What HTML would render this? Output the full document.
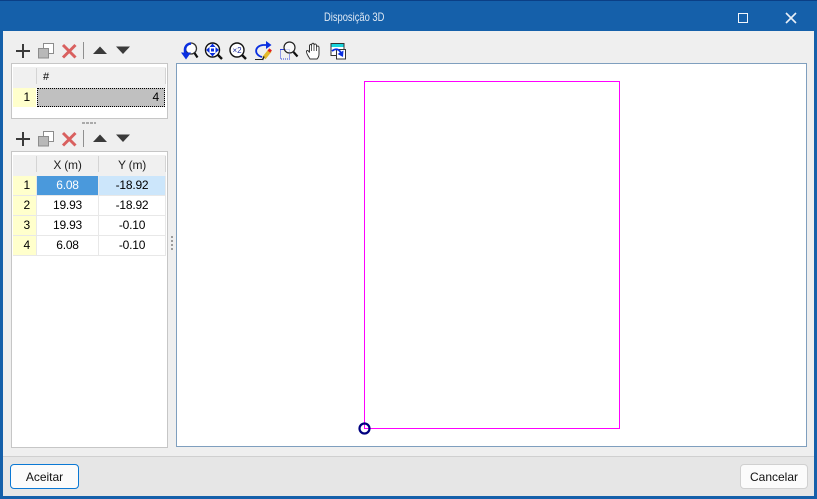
<!DOCTYPE html>
<html><head><meta charset="utf-8">
<style>
html,body{margin:0;padding:0;width:817px;height:499px;overflow:hidden;background:#1560aa;font-family:"Liberation Sans",sans-serif;color:#000}
div{position:absolute;box-sizing:border-box}
svg{position:absolute;left:0;top:0}
.t{font-size:12px;line-height:19px;text-align:center;letter-spacing:-.2px;white-space:nowrap}
.rh{left:13px;width:23px;background:#ffffcc;text-align:right;padding-right:6px}
.x{left:37px;width:61px}
.y{left:99px;width:66px}
.line{background:#e8e8e8}
</style></head><body>
<div style="left:0;top:0;width:817px;height:1px;background:#0b3f86"></div>
<div style="left:324px;top:1px;height:30px;line-height:33px;color:#dfe9f4;font-size:12px;white-space:nowrap;transform:scaleX(.78);transform-origin:0 0">Disposição 3D</div>
<div style="left:3px;top:31px;width:811px;height:465px;background:#efefef"></div>
<div style="left:3px;top:456px;width:811px;height:1px;background:#d0d0d0"></div>
<div style="left:3px;top:457px;width:811px;height:39px;background:#e6e6e6"></div>

<!-- table 1 -->
<div style="left:11px;top:63px;width:157px;height:56px;background:#fff;border:1px solid #c6c6c6"></div>
<div style="left:13px;top:67px;width:153px;height:21px;background:#f0f0f0"></div>
<div style="left:36px;top:68px;width:1px;height:16px;background:#d4d4d4"></div>
<div style="left:165px;top:68px;width:1px;height:16px;background:#d4d4d4"></div>
<div class="t" style="left:43px;top:67px;line-height:20px;font-size:11px">#</div>
<div class="t rh" style="top:88px;height:19px">1</div>
<div class="t" style="left:37px;top:88px;width:128px;height:19px;background:#c0c0c0;border:1px dotted #000;line-height:17px;text-align:right;padding-right:5px">4</div>
<div style="left:82px;top:122px;width:3px;height:2px;background:#aaa"></div>
<div style="left:86px;top:122px;width:3px;height:2px;background:#aaa"></div>
<div style="left:90px;top:122px;width:3px;height:2px;background:#aaa"></div>
<div style="left:94px;top:122px;width:2px;height:2px;background:#aaa"></div>

<!-- table 2 -->
<div style="left:11px;top:151px;width:157px;height:297px;background:#fff;border:1px solid #c6c6c6"></div>
<div style="left:13px;top:155px;width:153px;height:21px;background:#f0f0f0"></div>
<div style="left:36px;top:156px;width:1px;height:16px;background:#d4d4d4"></div>
<div style="left:98px;top:156px;width:1px;height:16px;background:#d4d4d4"></div>
<div style="left:165px;top:156px;width:1px;height:16px;background:#d4d4d4"></div>
<div class="t x" style="top:155px;color:#222;line-height:20px">X (m)</div>
<div class="t y" style="top:155px;color:#222;line-height:20px">Y (m)</div>

<div class="t rh" style="top:176px;height:19px">1</div>
<div class="t x" style="top:176px;height:19px;background:#4a99dc;color:#fff">6.08</div>
<div class="t y" style="top:176px;height:19px;background:#cce6fb">-18.92</div>
<div class="t rh" style="top:196px;height:19px">2</div>
<div class="t x" style="top:196px">19.93</div>
<div class="t y" style="top:196px">-18.92</div>
<div class="t rh" style="top:216px;height:19px">3</div>
<div class="t x" style="top:216px">19.93</div>
<div class="t y" style="top:216px">-0.10</div>
<div class="t rh" style="top:236px;height:19px">4</div>
<div class="t x" style="top:236px">6.08</div>
<div class="t y" style="top:236px">-0.10</div>
<div class="line" style="left:13px;top:195px;width:153px;height:1px"></div>
<div class="line" style="left:13px;top:215px;width:153px;height:1px"></div>
<div class="line" style="left:13px;top:235px;width:153px;height:1px"></div>
<div class="line" style="left:13px;top:255px;width:153px;height:1px"></div>
<div class="line" style="left:36px;top:176px;width:1px;height:80px"></div>
<div class="line" style="left:98px;top:176px;width:1px;height:80px"></div>
<div class="line" style="left:165px;top:176px;width:1px;height:80px"></div>

<!-- view -->
<div style="left:176px;top:63px;width:631px;height:384px;background:#fff;border:1px solid #7f9fbe"></div>

<!-- buttons -->
<div style="left:10px;top:464px;width:69px;height:25px;background:#fbfbfb;border:1px solid #0a78d4;border-radius:4px;font-size:12px;line-height:24px;text-align:center;color:#111">Aceitar</div>
<div style="left:740px;top:464px;width:68px;height:25px;background:#fbfbfb;border:1px solid #d0d0d0;border-radius:4px;font-size:12px;line-height:24px;text-align:center;color:#111">Cancelar</div>

<svg width="817" height="499" viewBox="0 0 817 499">
  <!-- window controls -->
  <rect x="738.500" y="13.500" width="9" height="9" fill="none" stroke="#f2f6fb" stroke-width="1"/>
  <path d="M786 13 L796 23 M796 13 L786 23" stroke="#e8eff7" stroke-width="1.600" fill="none"/>

  <!-- left toolbar 1 -->
  <g>
    <path d="M16 51H30M23 44V58" stroke="#3a3a3a" stroke-width="2" fill="none"/>
    <rect x="43.500" y="43.500" width="10" height="10" fill="#fff" stroke="#8c8c8c"/>
    <rect x="38.500" y="48.500" width="10" height="9.500" fill="#b8b8b8" stroke="#8c8c8c"/>
    <path d="M63 45 L75.500 57.500 M75.500 45 L63 57.500" stroke="#d9605f" stroke-width="3" fill="none"/>
    <rect x="83" y="42" width="1" height="17" fill="#8f8f8f"/>
    <path d="M93 54 L100 46.500 L107 54Z" fill="#3a3a3a"/>
    <path d="M116 46.500 L130 46.500 L123 54Z" fill="#3a3a3a"/>
  </g>
  <!-- left toolbar 2 -->
  <g transform="translate(0,88)">
    <path d="M16 51H30M23 44V58" stroke="#3a3a3a" stroke-width="2" fill="none"/>
    <rect x="43.500" y="43.500" width="10" height="10" fill="#fff" stroke="#8c8c8c"/>
    <rect x="38.500" y="48.500" width="10" height="9.500" fill="#b8b8b8" stroke="#8c8c8c"/>
    <path d="M63 45 L75.500 57.500 M75.500 45 L63 57.500" stroke="#d9605f" stroke-width="3" fill="none"/>
    <rect x="83" y="42" width="1" height="17" fill="#8f8f8f"/>
    <path d="M93 54 L100 46.500 L107 54Z" fill="#3a3a3a"/>
    <path d="M116 46.500 L130 46.500 L123 54Z" fill="#3a3a3a"/>
  </g>

  <!-- splitter dots -->
  <g fill="#9c9c9c">
    <rect x="171" y="236" width="2" height="2"/><rect x="171" y="240" width="2" height="2"/>
    <rect x="171" y="244" width="2" height="2"/><rect x="171" y="248" width="2" height="2"/>
  </g>

  <!-- zoom previous -->
  <g fill="none">
    <circle cx="191" cy="48.500" r="5.500" stroke="#333" stroke-width="1.300" fill="#fff"/>
    <path d="M194.500 53 L197.500 57.500" stroke="#111" stroke-width="2.200"/>
    <path d="M186.500 55 C183.500 50 185 44 191 43.500" stroke="#0a2fe0" stroke-width="2.600"/>
    <path d="M181 52.500 L191 52.500 L186 59.500Z" fill="#0a2fe0"/>
  </g>
  <!-- zoom all -->
  <g>
    <circle cx="212.500" cy="50" r="7" fill="#fff" stroke="#111" stroke-width="1.400"/>
    <path d="M218 55 L222 59" stroke="#111" stroke-width="2.400"/>
    <path d="M212.500 43.500 l3 3.500h-6zM212.500 56.500 l3 -3.500h-6zM206 50 l3.500 -3v6zM219 50 l-3.500 -3v6z" fill="#0a2fe0"/>
    <rect x="211" y="48.500" width="3" height="3" fill="#0a2fe0"/>
  </g>
  <!-- zoom x2 -->
  <g>
    <circle cx="237" cy="50" r="7" fill="#fff" stroke="#111" stroke-width="1.400"/>
    <path d="M242 55 L246 59" stroke="#111" stroke-width="2.400"/>
    <text x="237" y="53" font-size="8" text-anchor="middle" fill="#1a2a9a" font-family="Liberation Sans">×2</text>
  </g>
  <!-- refresh + pencil -->
  <g fill="none">
    <path d="M262 57 C254 55 254 46 263 45 L268 45" stroke="#0a2fe0" stroke-width="1.800"/>
    <path d="M266 41 L271.500 45 L266 49Z" fill="#0a2fe0"/>
    <path d="M255 59.500 H263" stroke="#222" stroke-width="1"/>
    <path d="M264 58 L270 50.500" stroke="#e3b92c" stroke-width="4"/>
    <path d="M268.500 49.500 L271 51.500" stroke="#e02020" stroke-width="3"/>
    <path d="M262.500 60 L264 56.500" stroke="#222" stroke-width="1.500"/>
  </g>
  <!-- zoom window -->
  <g fill="none">
    <rect x="280.500" y="49.500" width="9" height="9.500" stroke="#2a3fe0" stroke-width="1" stroke-dasharray="1 1"/>
    <path d="M280.500 49.500 H286" stroke="#2a3fe0"/>
    <circle cx="289.500" cy="47.500" r="5.500" stroke="#222" stroke-width="1.200" fill="#fff" fill-opacity=".6"/>
    <path d="M293.500 52 L297.500 56.500" stroke="#111" stroke-width="2.200"/>
  </g>
  <!-- hand -->
  <path d="M310 59 C308 56 306 53 306.500 51 C307.500 49.500 309 51.500 309.500 52.500 L309.500 45.500 C310 44 311.500 44 311.500 45.500 L311.800 44 C312.500 42.800 314 43 314 44.500 L314.300 44.500 C315 43.500 316.500 44 316.500 45.500 L316.800 46.500 C317.500 45.500 319 46 319 47.500 L319 54 C319 56 318 58 317 59 Z" fill="#fff" stroke="#333" stroke-width="1"/>
  <path d="M311.500 45.500V51M314 44.500V51M316.500 45.500V51" stroke="#333" stroke-width=".8" fill="none"/>
  <!-- window arrow -->
  <g>
    <rect x="331" y="43.500" width="13" height="12" fill="#fff" stroke="#333"/>
    <rect x="331.500" y="44" width="12" height="3" fill="#19d4dc"/>
    <rect x="336.500" y="49.500" width="9" height="9.500" fill="#fff" stroke="#333"/>
    <path d="M332 51 C336 48 339 49 341 53" stroke="#0a2fe0" stroke-width="1.800" fill="none"/>
    <path d="M337.500 54 L343.500 50.500 L343 57Z" fill="#0a2fe0"/>
  </g>

  <!-- drawing -->
  <rect x="364.500" y="81.500" width="255" height="347" fill="none" stroke="#ff00ff" stroke-width="1"/>
  <circle cx="364.500" cy="428.500" r="5" fill="none" stroke="#000080" stroke-width="2.200"/>
</svg>
</body></html>
